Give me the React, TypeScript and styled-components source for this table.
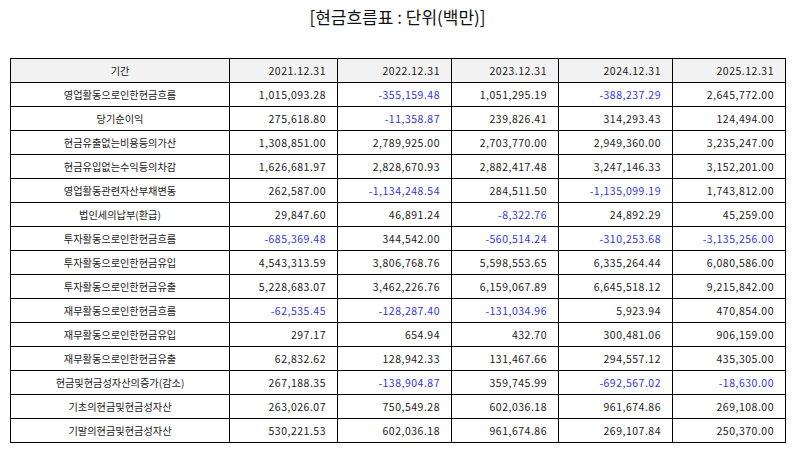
import React from "react";
import styled, { createGlobalStyle } from "styled-components";

const GlobalStyle = createGlobalStyle`
  html, body { margin: 0; padding: 0; background: #ffffff; }
  body { font-family: "Noto Sans CJK KR", "Noto Sans", sans-serif; color: #111; }
`;

const Page = styled.div`
  width: 794px;
  height: 452px;
  padding: 0 9px 0 10px;
  box-sizing: border-box;
  display: flex;
  flex-direction: column;
`;

const Title = styled.h1`
  margin: 0 0 24px 0;
  height: 34px;
  line-height: 34px;
  text-align: center;
  font-size: 17px;
  font-weight: 400;
  color: #111;
  font-family: "Noto Sans CJK KR", sans-serif;
`;

const Table = styled.table`
  width: 775px;
  border-collapse: collapse;
  table-layout: fixed;
  border: 1px solid #000;
`;

const Cell = styled.td<{ $align?: "center" | "right"; $neg?: boolean; $head?: boolean }>`
  height: 23px;
  padding: 0 ${(p) => (p.$align === "right" ? "11px" : "4px")} 0 4px;
  border: 1px solid #000;
  box-sizing: border-box;
  text-align: ${(p) => p.$align ?? "right"};
  font-size: ${(p) => (p.$align === "right" ? "10.5px" : "10.2px")};
  font-weight: 400;
  line-height: 23px;
  white-space: nowrap;
  color: ${(p) => (p.$neg ? "#3535d8" : "#1a1a1a")};
  background: ${(p) => (p.$head ? "#f2f2f2" : "#ffffff")};
  letter-spacing: ${(p) => (p.$align === "right" ? "0.5px" : "0px")};
`;

const widths = [219, 108, 114, 107, 114, 113];
const headers = ["2021.12.31", "2022.12.31", "2023.12.31", "2024.12.31", "2025.12.31"];

const rows: [string, string[]][] = [
  ["영업활동으로인한현금흐름", ["1,015,093.28", "-355,159.48", "1,051,295.19", "-388,237.29", "2,645,772.00"]],
  ["당기순이익", ["275,618.80", "-11,358.87", "239,826.41", "314,293.43", "124,494.00"]],
  ["현금유출없는비용등의가산", ["1,308,851.00", "2,789,925.00", "2,703,770.00", "2,949,360.00", "3,235,247.00"]],
  ["현금유입없는수익등의차감", ["1,626,681.97", "2,828,670.93", "2,882,417.48", "3,247,146.33", "3,152,201.00"]],
  ["영업활동관련자산부채변동", ["262,587.00", "-1,134,248.54", "284,511.50", "-1,135,099.19", "1,743,812.00"]],
  ["법인세의납부(환급)", ["29,847.60", "46,891.24", "-8,322.76", "24,892.29", "45,259.00"]],
  ["투자활동으로인한현금흐름", ["-685,369.48", "344,542.00", "-560,514.24", "-310,253.68", "-3,135,256.00"]],
  ["투자활동으로인한현금유입", ["4,543,313.59", "3,806,768.76", "5,598,553.65", "6,335,264.44", "6,080,586.00"]],
  ["투자활동으로인한현금유출", ["5,228,683.07", "3,462,226.76", "6,159,067.89", "6,645,518.12", "9,215,842.00"]],
  ["재무활동으로인한현금흐름", ["-62,535.45", "-128,287.40", "-131,034.96", "5,923.94", "470,854.00"]],
  ["재무활동으로인한현금유입", ["297.17", "654.94", "432.70", "300,481.06", "906,159.00"]],
  ["재무활동으로인한현금유출", ["62,832.62", "128,942.33", "131,467.66", "294,557.12", "435,305.00"]],
  ["현금및현금성자산의증가(감소)", ["267,188.35", "-138,904.87", "359,745.99", "-692,567.02", "-18,630.00"]],
  ["기초의현금및현금성자산", ["263,026.07", "750,549.28", "602,036.18", "961,674.86", "269,108.00"]],
  ["기말의현금및현금성자산", ["530,221.53", "602,036.18", "961,674.86", "269,107.84", "250,370.00"]],
];

export default function App() {
  return (
    <>
      <GlobalStyle />
      <Page>
        <Title>[현금흐름표 : 단위(백만)]</Title>
        <Table>
          <colgroup>
            {widths.map((w, i) => (
              <col key={i} style={{ width: w }} />
            ))}
          </colgroup>
          <thead>
            <tr>
              <Cell as="th" $align="center" $head>
                기간
              </Cell>
              {headers.map((h) => (
                <Cell as="th" key={h} $align="right" $head>
                  {h}
                </Cell>
              ))}
            </tr>
          </thead>
          <tbody>
            {rows.map(([label, vals]) => (
              <tr key={label}>
                <Cell $align="center">{label}</Cell>
                {vals.map((v, i) => (
                  <Cell key={i} $align="right" $neg={v.startsWith("-")}>
                    {v}
                  </Cell>
                ))}
              </tr>
            ))}
          </tbody>
        </Table>
      </Page>
    </>
  );
}
